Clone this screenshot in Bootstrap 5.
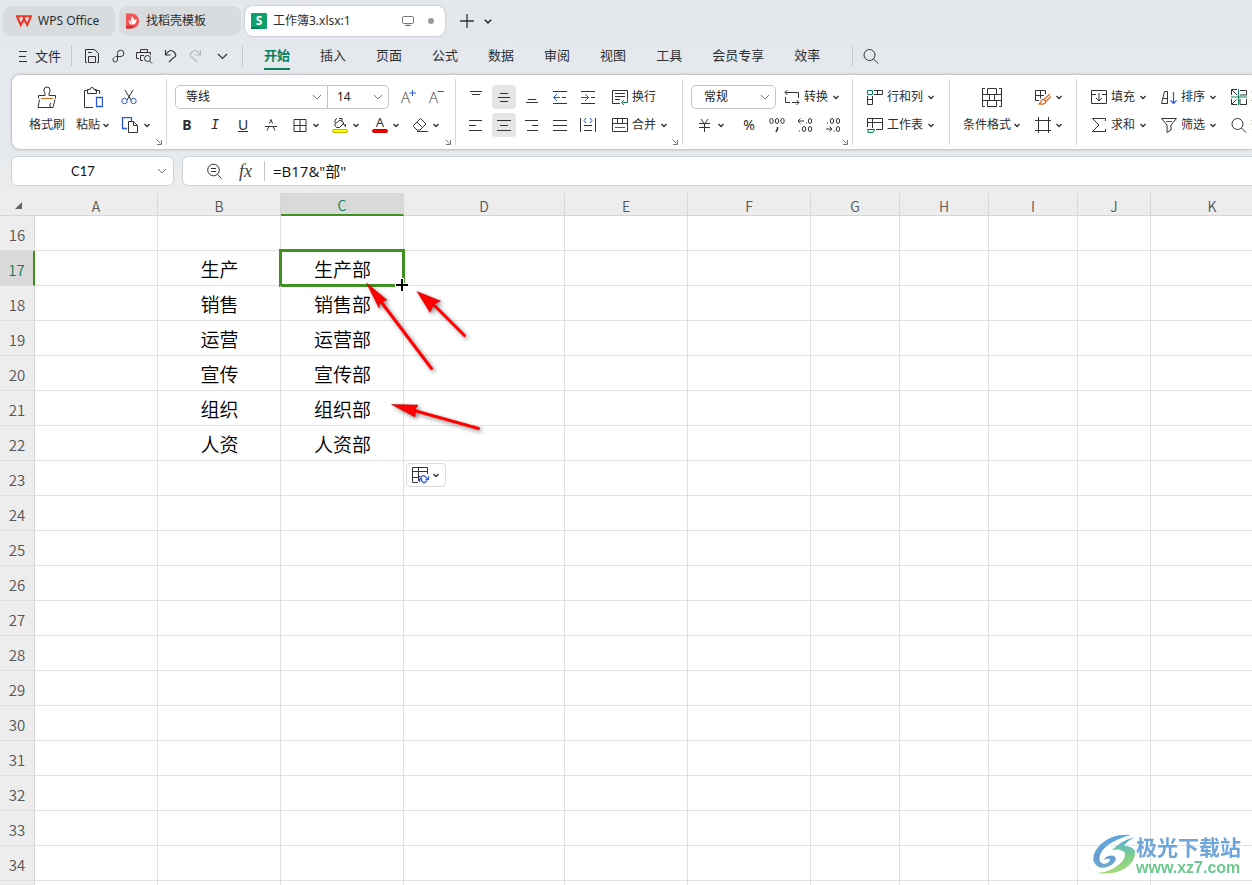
<!DOCTYPE html>
<html lang="zh-CN">
<head>
<meta charset="utf-8">
<meta name="viewport" content="width=device-width, initial-scale=1">
<title>工作簿3.xlsx - WPS Office</title>
<link href="https://cdn.jsdelivr.net/npm/bootstrap@5.3.0/dist/css/bootstrap.min.css" rel="stylesheet">
<style>
:root{--ink:#2b2e31;--green:#0a7f5a;--sel:#3f9120;--line:#e1e1e1}
body{font-family:"Noto Sans","Noto Sans CJK SC",sans-serif;font-size:12px;line-height:18px;color:var(--ink);
 height:100vh;overflow:hidden;background:#ededed linear-gradient(#e4e8ed 0,#e6e9ed 150px,#ededed 192px) no-repeat}
button{color:inherit}
svg{display:block;flex:none;fill:none;stroke:#333;stroke-width:1;overflow:visible}
svg text{stroke:none;fill:#333}
.doc-tab{height:30px;border:0;border-radius:8px;background:#d9dcdf;font-size:12px}
.doc-tab.active{background:#fff;box-shadow:0 0 2px rgba(60,70,80,.45)}
.tab-home{width:112px;padding-left:13px;gap:6px}
.tab-shell{width:122px;padding-left:6px}
.tab-book{width:200px;padding:0 11px 0 6px;gap:6px}
.tabstrip{padding:6px 3px 0;gap:4px}
.dot-mark{width:6px;height:6px;border-radius:50%;background:#999}
.plain{border:0;background:none;padding:0}
.menubar{height:39px;font-size:13px;padding-left:18px;gap:10px}
.menubar .plain{line-height:20px}
.vline{width:1px;height:20px;background:#c4c7ca}
.menubar .menu-link{font-size:13px;color:var(--ink);line-height:26px;border-bottom:2px solid transparent}
.menubar .menu-link.active{color:var(--green);font-weight:700;border-color:var(--green)}
.menus{gap:30px;padding:0 22px 0 11px}
.quick{gap:10px;padding:0 2px}
.ribbon{margin-left:12px;height:74px;background:#fff;border-radius:8px 0 0 8px;box-shadow:0 0 3px rgba(60,70,80,.55);padding-top:4px;overflow:hidden}
.grp{position:relative;flex:none;height:66px;border-right:1px solid #d4d4d4;padding-top:6px}
.g1{width:155px;padding-left:13px;gap:3px}.g2{width:289px;padding-left:8px}.g3{width:227px;padding-left:8px}
.g4{width:170px;padding-left:8px}.g5{width:97px;padding-left:10px}.g6{width:127px;padding-left:9px;gap:6px}.g7{width:240px;padding-left:10px;border:0}
.rows{display:flex;flex-direction:column;gap:4px}
.rows>div{display:flex;gap:4px;height:24px;align-items:center}
.g7 .rows>div{gap:6px}
.rb{display:flex;align-items:center;gap:4px;height:24px;min-width:24px;padding:0 4px;border:0;background:none;border-radius:4px;font-size:12px;white-space:nowrap}
.rb.on{background:#e5e5e5}
.ltr{justify-content:center;font-size:14px;padding:0}
.ital{font-family:"Liberation Mono",monospace}
.big{display:flex;flex-direction:column;align-items:center;gap:4px;border:0;background:none;padding:0 4px;font-size:12px;height:52px}
.big>svg{height:24px}
.big>span{display:flex;align-items:center;gap:2px;height:24px}
.corner{position:absolute;right:4px;bottom:0}
.combo{height:24px;font-size:12px;line-height:18px;padding:2px 20px 2px 10px;border:1px solid #c2c5c8;border-radius:5px;color:#222;
 background-position:right 4px center;background-size:12px 12px;
 background-image:url("data:image/svg+xml,%3Csvg xmlns='http://www.w3.org/2000/svg' viewBox='0 0 12 12'%3E%3Cpath d='M2 4l4 4 4-4' fill='none' stroke='%23777'/%3E%3C/svg%3E")}
.c-font{width:153px;border-radius:5px 0 0 5px}.c-size{width:61px;border-radius:0 5px 5px 0;border-left:0;padding-left:9px}.c-num{width:85px;padding-left:12px}
.fbar{padding:7px 0 7px 11px;gap:8px}
.fbox{height:30px;background:#fff;border:1px solid #d0d3d6;border-radius:6px}
.namebox{width:163px;padding-right:5px}
.namebox input{width:142px;font-family:Lato,sans-serif;font-size:13px;text-align:center}
.fbox input{border:0;outline:0;background:none;color:#111}
.f-input{font-size:15px;padding:0 8px;font-family:"Open Sans","Noto Sans CJK SC",sans-serif}
.fx-sign{font:italic 18px/24px "Liberation Serif",serif;color:#444}
.sheet{position:relative;overflow:hidden}
.grid-tbl{table-layout:fixed;width:1274px;border-collapse:separate;border-spacing:0;background:#fff}
.grid-tbl th{background:#ededed;color:#555;font:400 15px/22px "Noto Sans CJK SC",sans-serif;font-weight:350;text-align:center;padding:0}
.grid-tbl thead th{height:23px;font-size:14px;line-height:18px;padding-top:3px;border-right:1px solid #d6d6d6;border-bottom:1px solid #d6d6d6}
.grid-tbl tbody th{height:35px;padding-top:3px;border-right:1px solid #d6d6d6;border-bottom:1px solid #dedede}
.grid-tbl thead th:first-child{border-right:0}
.grid-tbl td{position:relative;padding:1px 0 0 1px;border-right:1px solid var(--line);border-bottom:1px solid var(--line);font:300 19px/28px "Noto Sans CJK SC",sans-serif;font-weight:350;color:#000;text-align:center}
.grid-tbl thead th.hot{background:#d9d9d9;color:var(--green);border-bottom:2px solid var(--sel)}
.grid-tbl tbody th.hot{background:#d9d9d9;color:var(--green);border-right:2px solid var(--sel)}
.cursor-cell::after{content:"";position:absolute;inset:-2px;border:3px solid var(--sel)}
.fill-opt{position:absolute;left:406px;top:270px;width:40px;height:24px;border:1px solid #dcdcdc;border-radius:4px;background:#fff;padding:0 5px;gap:2px}
.arrows{position:absolute;left:360px;top:77px;filter:drop-shadow(2px 2px 2px rgba(0,0,0,.45))}
.pointer{position:absolute;left:395px;top:85px}
.stamp{position:fixed;right:11px;bottom:8px}
.stamp-cn{font:700 21px/26px "Noto Sans CJK SC",sans-serif;color:#6ea6dc}
.stamp-url{font:700 16px/18px "Liberation Sans",sans-serif;color:#6cc88c;text-decoration:none}
</style>
</head>
<body>
<svg width="0" height="0" class="position-absolute">
<symbol id="cv" viewBox="0 0 8 8"><path d="M1.500 3L4 5.500 6.500 3" stroke-width="1.400"/></symbol>
<symbol id="launch" viewBox="0 0 6 6"><path d="M.5.5l4 4M5.500 1v4.500H1" stroke="#777"/></symbol>
<symbol id="brush" viewBox="0 0 20 24"><path d="M8 10.500V8q-1.500-1-1-3a3 3 0 0 1 6 0q.5 2-1 3v2.500h6.500v3M8 10.500H1.500v3M2.500 14.500L1 22.500h15l2-8M13 22v-3l1-1"/><path d="M4 13.500h12" stroke="#d9691f"/></symbol>
<symbol id="paste" viewBox="0 0 20 24"><path d="M5 5.500H1.500v17H10M12 5.500h4.500V9M4.500 8.500v-4H7q0-2 2-2t2 2h2.500v4z"/><path d="M13.500 12.500h6v9h-6z" stroke="#2b57d8" stroke-width="1.300"/></symbol>
<symbol id="cut" viewBox="0 0 16 16"><path d="M4 1l6 10M12 1L6 11"/><circle cx="3.500" cy="12" r="2.700" stroke="#2b57d8"/><circle cx="12.500" cy="12" r="2.700" stroke="#2b57d8"/></symbol>
<symbol id="copy" viewBox="0 0 16 16"><path d="M5 11.500H.5v-11h9V4" stroke="#2b57d8" stroke-width="1.300"/><path d="M6.500 4.500h5l4 4v7h-9zM11.500 4.500v4h4"/></symbol>
<symbol id="edge" viewBox="0 0 16 16"><path d="M2.500 2.500h12v12h-12zM8.500 2.500v12M2.500 8.500h12"/></symbol>
<symbol id="pour" viewBox="0 0 16 16"><path d="M7 1.500h3v3M8 3l4 3-4.500 4.500h-3L3 8.500V7zM3 6V3l2-1.500M11 6.500l2.500 3V7"/><rect x=".5" y="12.500" width="15" height="3" rx="1.500" fill="#ff0" stroke="#b9b900"/></symbol>
<symbol id="fontc" viewBox="0 0 16 16"><text x="8" y="10" font-size="13" text-anchor="middle">A</text><rect x=".5" y="12.500" width="15" height="3" rx="1.500" fill="#f00" stroke="#c00000"/></symbol>
<symbol id="erase" viewBox="0 0 16 16"><path d="M8.500 1.500L14 7l-6 6H5L1.500 9.500v-1zM5 5l5.500 5.500M5 14.500h11"/></symbol>
<symbol id="a-t" viewBox="0 0 16 16"><path d="M2 2.500h12M4 5.500h8"/></symbol>
<symbol id="a-m" viewBox="0 0 16 16"><path d="M4 4.500h8M2 8.500h12M4 12.500h8"/></symbol>
<symbol id="a-b" viewBox="0 0 16 16"><path d="M4 10.500h8M2 13.500h12"/></symbol>
<symbol id="out" viewBox="0 0 16 16"><path d="M1 2.500h14M10 8.500h4M1 14.500h14"/><path d="M8 8.500H1.500M5 5L1.500 8.500 5 12" stroke="#2b57d8"/></symbol>
<symbol id="in" viewBox="0 0 16 16"><path d="M1 2.500h14M11 8.500h4M1 14.500h14"/><path d="M1 8.500h7.500M5 5l3.500 3.500L5 12" stroke="#2b57d8"/></symbol>
<symbol id="al" viewBox="0 0 16 16"><path d="M1 3.500h13M1 8.500h7M1 13.500h13"/></symbol>
<symbol id="ac" viewBox="0 0 16 16"><path d="M1 3.500h14M4 8.500h8M1 13.500h14"/></symbol>
<symbol id="ar" viewBox="0 0 16 16"><path d="M1 3.500h13M8 8.500h6M3 13.500h11"/></symbol>
<symbol id="aj" viewBox="0 0 16 16"><path d="M1 3.500h14M1 8.500h14M1 13.500h14"/></symbol>
<symbol id="dist" viewBox="0 0 16 16"><path d="M.5 1v14M15.500 1v14M4 8.500h8M4 13.500h8"/><path d="M6 1L4 3.500 6 6M10 1l2 2.500L10 6" stroke="#2b57d8"/></symbol>
<symbol id="wrap" viewBox="0 0 16 16"><path d="M8 14.500H.5v-13h15V10M3 4.500h10M3 7.500h10M3 10.500h5"/><path d="M15.500 9v4.500h-5M12 11l-2.500 2.500L12 16" stroke="#0a7f5a"/></symbol>
<symbol id="merge" viewBox="0 0 16 16"><path d="M.5 1.500h15v13H.5zM.5 6.500h15M5.500 1.500v5M10.500 1.500v5"/><path d="M3 10.500h10" stroke="#0a7f5a"/></symbol>
<symbol id="conv" viewBox="0 0 16 16"><path d="M1.500 8v5.500H6M3.500 1L1 3.500 3.500 6M1 3.500h13.500V9M8 13.500h7M12.500 11l2.500 2.500-2.500 2.500"/></symbol>
<symbol id="rc" viewBox="0 0 16 16"><path d="M7 1.500h8.500v4H7M10.500 1.500v4M.5 7v8.500h5V7M.5 10.500h5"/><path d="M.5 1.500h5v4h-5z" stroke="#0a7f5a"/></symbol>
<symbol id="ws" viewBox="0 0 16 16"><path d="M.5 10V1.500h15v11H9M.5 5.500h15M5.500 1.500V11"/><path d="M0 12.500h8M1 12.500v3h5l1.500-3" stroke="#0a7f5a"/></symbol>
<symbol id="cond" viewBox="0 0 20 24"><path d="M3 3.500H.5v18H3M17 3.500h2.500v18H17M.5 9.500h19M.5 15.500h19M5.500 3.500h9M5.500 21.500h9M5.500 3.500v6M14.500 3.500v6M7.500 9.500v6M12.500 9.500v6M5.500 15.500v6M14.500 15.500v6"/></symbol>
<symbol id="style" viewBox="0 0 16 16"><path d="M4 11.500H.5v-10h10V5M5.500 1.500v8M.5 6.500H9"/><path d="M15 5l-6 5.500M16 7.500l-5 5M9 10.500q-3-.5-3 2.500l-2 2q6 1 7-2.500z" stroke="#d9691f" stroke-width="1.200"/></symbol>
<symbol id="frame" viewBox="0 0 16 16"><path d="M3.500 0v16M13.500 0v16M0 3.500h16M0 13.500h16"/></symbol>
<symbol id="down" viewBox="0 0 16 16"><path d="M.5 1.500h15v13H.5zM.5 5.500H5M11 5.500h4.500M8 4v8M5 9l3 3 3-3"/></symbol>
<symbol id="sum" viewBox="0 0 16 16"><path d="M14.500 4V1.500h-13L8 8l-6.500 6.500h13V12"/></symbol>
<symbol id="sort" viewBox="0 0 16 16"><path d="M.5 14.500L3.500 2.500h3v12zM2 9.500h4"/><path d="M12.500 3v11.500M9.500 11.500l3 3 3-3" stroke="#2b57d8" stroke-width="1.200"/></symbol>
<symbol id="filt" viewBox="0 0 16 16"><path d="M.5 1.500h15L10 8v5l-4 2.500V8z"/><path d="M5 4.500h6" stroke="#0a7f5a"/></symbol>
<symbol id="frz" viewBox="0 0 16 16"><path d="M6 .5H.5V6M9 1.500h6.500V6H9M.5 10v5.500H6M9 10v5.500h6.500V10M1 1l5 5M5.500 10.500L1 15"/><path d="M7.500 0v16M0 8h16" stroke="#0a7f5a"/></symbol>
<symbol id="find" viewBox="0 0 16 16"><circle cx="6.500" cy="7" r="5.500"/><path d="M10.500 11l4.500 4.500"/></symbol>
</svg>

<header>
<div class="tabstrip d-flex align-items-center">
 <button class="doc-tab tab-home d-flex align-items-center"><svg width="16" height="12" viewBox="0 0 16 12"><path d="M0 1.200h5.500M1 1.500L4.800 10 8 4l3.200 6L15 1.200H7l1.500 3" stroke="#ee3426" stroke-width="2"/></svg><span>WPS Office</span></button>
 <button class="doc-tab tab-shell d-flex align-items-center gap-1"><svg width="17" height="16" viewBox="0 0 18 16"><path d="M1 0h6a8 8 0 0 1 0 16H1z" fill="#ef5554" stroke="none"/><path d="M1 13h9l-3 3H1z" fill="#d52f35" stroke="none"/><path d="M4 7q3 1 3.500 5Q4 12 4 7zM7.500 3q4 4 .5 8.500Q5 7 7.500 3zM12 6q1 5-4 6 0-5 4-6z" fill="#fff" stroke="none"/></svg><span>找稻壳模板</span></button>
 <button class="doc-tab tab-book active d-flex align-items-center"><svg width="16" height="16" viewBox="0 0 16 16"><rect width="16" height="16" rx="1" fill="#10a06b" stroke="none"/><path d="M0 14h8v2H0z" fill="#087a50" stroke="none"/><text x="8" y="12" font-size="12" font-weight="700" text-anchor="middle" style="fill:#fff">S</text></svg><span>工作簿3.xlsx:1</span><svg class="ms-auto me-2" width="12" height="12" viewBox="0 0 12 12" style="stroke:#777"><rect x=".5" y="1.500" width="11" height="7" rx="1"/><path d="M6 8.500v2M3 10.500h6"/></svg><span class="dot-mark"></span></button>
 <button class="plain ms-2 pe-1" aria-label="新建"><svg width="18" height="16" viewBox="0 0 18 16"><path d="M3 8h14M10 1v14" stroke-width="1.300"/></svg></button>
 <button class="plain" aria-label="更多"><svg width="10" height="10"><use href="#cv"/></svg></button>
</div>

<nav class="menubar d-flex align-items-center">
 <button class="plain d-flex align-items-center gap-2"><svg width="9" height="12" viewBox="0 0 9 12"><path d="M1 1.500h8M1 6.500h7M1 11.500h8"/></svg><span>文件</span></button>
 <span class="vline"></span>
 <div class="quick d-flex">
 <button class="plain" aria-label="保存"><svg width="16" height="16" viewBox="0 0 16 16"><path d="M3 14.500H1.500v-13h9l4 4v9H13M4.500 14.500v-6h7v6zM4 4.500h4"/></svg></button>
 <button class="plain" aria-label="分享"><svg width="16" height="16" viewBox="0 0 16 16"><path d="M5.500 8.500H11A3.200 3.200 0 1 0 7.500 5.500V12a2.300 2.300 0 1 1-3-2.500"/></svg></button>
 <button class="plain" aria-label="打印预览"><svg width="16" height="16" viewBox="0 0 16 16"><path d="M4.500 4V1.500h7V4M3 10.500H.5v-6h14V7M7 12.500H4.500v-5H8"/><circle cx="11.500" cy="10.500" r="3"/><path d="M13.500 13l2.500 2.500"/></svg></button>
 <button class="plain" aria-label="撤销"><svg width="16" height="16" viewBox="0 0 16 16"><path d="M3.500 2v5h5M3.500 7Q8 0 12 4t-1 6l-4 4" stroke-width="1.100"/></svg></button>
 <button class="plain" aria-label="恢复"><svg width="16" height="16" viewBox="0 0 16 16" style="stroke:#b4b7ba"><path d="M12.500 2v5h-5M12.500 7Q8 0 4 4t1 6l4 4" stroke-width="1.100"/></svg></button>
 <button class="plain" aria-label="更多"><svg width="16" height="16" viewBox="0 0 16 16"><path d="M4 6l4.500 4.500L13 6" stroke-width="1.200"/></svg></button>
 </div>
 <span class="vline"></span>
 <div class="menus d-flex">
 <button class="plain menu-link active">开始</button><button class="plain menu-link">插入</button><button class="plain menu-link">页面</button><button class="plain menu-link">公式</button><button class="plain menu-link">数据</button><button class="plain menu-link">审阅</button><button class="plain menu-link">视图</button><button class="plain menu-link">工具</button><button class="plain menu-link">会员专享</button><button class="plain menu-link">效率</button>
 </div>
 <span class="vline"></span>
 <button class="plain" aria-label="搜索"><svg width="16" height="16"><use href="#find"/></svg></button>
</nav>

<div class="ribbon d-flex">
 <div class="grp g1 d-flex">
  <button class="big"><svg width="20" height="24"><use href="#brush"/></svg><span>格式刷</span></button>
  <button class="big"><svg width="20" height="24"><use href="#paste"/></svg><span>粘贴<svg width="8" height="8"><use href="#cv"/></svg></span></button>
  <div class="rows">
   <div><button class="rb" aria-label="剪切"><svg width="16" height="16"><use href="#cut"/></svg></button></div>
   <div><button class="rb" aria-label="复制"><svg width="18" height="16"><use href="#copy"/></svg><svg width="8" height="8"><use href="#cv"/></svg></button></div>
  </div>
  <svg class="corner" width="6" height="6"><use href="#launch"/></svg>
 </div>
 <div class="grp g2"><div class="rows">
  <div><span class="d-flex me-1"><select class="form-select combo c-font" aria-label="字体"><option>等线</option></select><select class="form-select combo c-size" aria-label="字号"><option>14</option></select></span>
   <button class="rb" aria-label="增大字号"><svg width="16" height="16" viewBox="0 0 16 16"><text x="0" y="14" font-size="15" font-weight="300" font-family="Open Sans">A</text><path d="M11.500 1v6M8.500 4H15" stroke="#2b57d8"/></svg></button>
   <button class="rb" aria-label="减小字号"><svg width="16" height="16" viewBox="0 0 16 16"><text x="0" y="14" font-size="15" font-weight="300" font-family="Open Sans">A</text><path d="M8.500 2.500H15" stroke="#2b57d8"/></svg></button></div>
  <div><button class="rb ltr fw-bold">B</button><button class="rb ltr fst-italic ital">I</button><button class="rb ltr text-decoration-underline">U</button><button class="rb" aria-label="删除线"><svg width="16" height="16" viewBox="0 0 16 16"><path d="M2 9.500h12M4 13.500L6 9.500M6.500 6.500L8 2.500l1.500 4M10 9.500l2 4"/></svg></button>
   <button class="rb" aria-label="边框"><svg width="17" height="16"><use href="#edge"/></svg><svg width="8" height="8"><use href="#cv"/></svg></button>
   <button class="rb" aria-label="填充颜色"><svg width="16" height="16"><use href="#pour"/></svg><svg width="8" height="8"><use href="#cv"/></svg></button>
   <button class="rb" aria-label="字体颜色"><svg width="16" height="16"><use href="#fontc"/></svg><svg width="8" height="8"><use href="#cv"/></svg></button>
   <button class="rb" aria-label="清除"><svg width="16" height="16"><use href="#erase"/></svg><svg width="8" height="8"><use href="#cv"/></svg></button></div>
  </div><svg class="corner" width="6" height="6"><use href="#launch"/></svg></div>
 <div class="grp g3"><div class="rows">
  <div><button class="rb" aria-label="顶端对齐"><svg width="16" height="16"><use href="#a-t"/></svg></button><button class="rb on" aria-label="垂直居中"><svg width="16" height="16"><use href="#a-m"/></svg></button><button class="rb" aria-label="底端对齐"><svg width="16" height="16"><use href="#a-b"/></svg></button><button class="rb" aria-label="减少缩进"><svg width="16" height="16"><use href="#out"/></svg></button><button class="rb" aria-label="增加缩进"><svg width="16" height="16"><use href="#in"/></svg></button>
   <button class="rb ms-1"><svg width="16" height="16"><use href="#wrap"/></svg>换行</button></div>
  <div><button class="rb" aria-label="左对齐"><svg width="16" height="16"><use href="#al"/></svg></button><button class="rb on" aria-label="水平居中"><svg width="16" height="16"><use href="#ac"/></svg></button><button class="rb" aria-label="右对齐"><svg width="16" height="16"><use href="#ar"/></svg></button><button class="rb" aria-label="两端对齐"><svg width="16" height="16"><use href="#aj"/></svg></button><button class="rb" aria-label="分散对齐"><svg width="16" height="16"><use href="#dist"/></svg></button>
   <button class="rb ms-1"><svg width="16" height="16"><use href="#merge"/></svg>合并<svg width="8" height="8"><use href="#cv"/></svg></button></div>
  </div><svg class="corner" width="6" height="6"><use href="#launch"/></svg></div>
 <div class="grp g4"><div class="rows">
  <div><select class="form-select combo c-num" aria-label="数字格式"><option>常规</option></select><button class="rb px-1"><svg width="16" height="16"><use href="#conv"/></svg>转换<svg width="8" height="8"><use href="#cv"/></svg></button></div>
  <div><button class="rb" aria-label="货币"><svg width="18" height="16" viewBox="0 0 18 16"><path d="M6 2l3 4.500M13 2l-3 4.500M4 6.500h11M4 10.500h11M9.500 6.500V15"/></svg><svg width="8" height="8"><use href="#cv"/></svg></button><button class="rb ltr ms-1">%</button>
   <button class="rb" aria-label="千位分隔"><svg width="16" height="16" viewBox="0 0 16 16"><ellipse cx="2.500" cy="4" rx="1.700" ry="2.500"/><ellipse cx="8" cy="4" rx="1.700" ry="2.500"/><ellipse cx="13.500" cy="4" rx="1.700" ry="2.500"/><path d="M8.500 10v2l-1.500 3" stroke-width="1.600"/></svg></button>
   <button class="rb" aria-label="增加小数"><svg width="16" height="16" viewBox="0 0 16 16"><path d="M1 4h6M3.500 1.500L1 4l2.500 2.500M9 6h1M2 14h1"/><ellipse cx="13" cy="4" rx="1.700" ry="2.500"/><ellipse cx="7" cy="12" rx="1.700" ry="2.500"/><ellipse cx="13" cy="12" rx="1.700" ry="2.500"/></svg></button>
   <button class="rb" aria-label="减少小数"><svg width="16" height="16" viewBox="0 0 16 16"><path d="M1 12h6M4.500 9.500L7 12l-2.500 2.500M9 14h1M2 6h1"/><ellipse cx="7" cy="4" rx="1.700" ry="2.500"/><ellipse cx="13" cy="4" rx="1.700" ry="2.500"/><ellipse cx="13" cy="12" rx="1.700" ry="2.500"/></svg></button></div>
  </div><svg class="corner" width="6" height="6"><use href="#launch"/></svg></div>
 <div class="grp g5"><div class="rows">
  <div><button class="rb"><svg width="16" height="16"><use href="#rc"/></svg>行和列<svg width="8" height="8"><use href="#cv"/></svg></button></div>
  <div><button class="rb"><svg width="16" height="16"><use href="#ws"/></svg>工作表<svg width="8" height="8"><use href="#cv"/></svg></button></div></div></div>
 <div class="grp g6 d-flex">
  <button class="big"><svg width="20" height="24"><use href="#cond"/></svg><span>条件格式<svg width="8" height="8"><use href="#cv"/></svg></span></button>
  <div class="rows"><div><button class="rb" aria-label="表格样式"><svg width="16" height="16"><use href="#style"/></svg><svg width="8" height="8"><use href="#cv"/></svg></button></div>
  <div><button class="rb" aria-label="单元格样式"><svg width="16" height="16"><use href="#frame"/></svg><svg width="8" height="8"><use href="#cv"/></svg></button></div></div></div>
 <div class="grp g7"><div class="rows">
  <div><button class="rb"><svg width="16" height="16"><use href="#down"/></svg>填充<svg width="8" height="8"><use href="#cv"/></svg></button><button class="rb"><svg width="16" height="16"><use href="#sort"/></svg>排序<svg width="8" height="8"><use href="#cv"/></svg></button><button class="rb"><svg width="16" height="16"><use href="#frz"/></svg>冻结</button></div>
  <div><button class="rb"><svg width="16" height="16"><use href="#sum"/></svg>求和<svg width="8" height="8"><use href="#cv"/></svg></button><button class="rb"><svg width="16" height="16"><use href="#filt"/></svg>筛选<svg width="8" height="8"><use href="#cv"/></svg></button><button class="rb"><svg width="16" height="16"><use href="#find"/></svg>查找</button></div></div></div>
</div>

<div class="fbar d-flex">
 <div class="fbox namebox d-flex align-items-center"><input value="C17" aria-label="名称框"><svg class="ms-auto" width="12" height="12" viewBox="0 0 12 12"><path d="M2 4l4 4 4-4" stroke="#777"/></svg></div>
 <div class="fbox flex-grow-1 d-flex align-items-center rounded-end-0 border-end-0 ps-4">
  <svg width="16" height="16" viewBox="0 0 16 16"><circle cx="6.500" cy="7" r="5.800"/><path d="M10.500 11.500l4 4M4 5.500h5M4 8.500h5"/></svg>
  <span class="fx-sign ms-3 me-2">fx</span><span class="vline ms-1"></span>
  <input class="f-input flex-grow-1" value='=B17&amp;"部"' aria-label="编辑栏"></div>
</div>
</header>

<main class="sheet">
<table class="grid-tbl">
<colgroup><col style="width:35px"><col style="width:123px"><col style="width:123px"><col style="width:123px"><col style="width:161px"><col style="width:123px"><col style="width:123px"><col style="width:89px"><col style="width:89px"><col style="width:89px"><col style="width:73px"><col style="width:123px"></colgroup>
<thead><tr><th scope="col"><svg class="mx-auto" width="8" height="8" viewBox="0 0 8 8"><path d="M8 0v7H1z" fill="#666" stroke="none"/></svg></th><th>A</th><th>B</th><th class="hot">C</th><th>D</th><th>E</th><th>F</th><th>G</th><th>H</th><th>I</th><th>J</th><th>K</th></tr></thead>
<tbody id="cells"></tbody>
</table>
<button class="fill-opt d-flex align-items-center" aria-label="自动填充选项"><svg width="18" height="18" viewBox="0 0 18 18"><path d="M6 16.500H.5v-15h15V8M.5 5.500h15M.5 11.500H6M6.500 1.500V15M6.500 10.500h2"/><path d="M8.500 12.500Q9.500 9.500 12 9.500l3.500 3.500M16.500 10v3.500h-3M15.500 14.500L12 17l-3.500-3.500M7.500 16v-3h3" stroke="#2b57d8" stroke-width="1.100"/></svg><svg width="8" height="8"><use href="#cv"/></svg></button>
<svg class="arrows" width="130" height="180" viewBox="360 270 130 180">
 <g stroke="#f00" stroke-width="3" stroke-linecap="round"><path d="M382 303l49.500 65.500M435 306l29.500 29.500M416 411l62.500 17.500"/></g>
 <g fill="#f00" stroke="#b00" stroke-width=".5"><path d="M366.500 283l20.500 17-4.500 1.500-2.500 2-1 4.500zM417 291.500l23.500 9.500-5.500 3-2.500 3-2.500 5.500zM391.500 404.500l26.500.5-2.500 4v3l-.5 5z"/></g>
</svg>
<svg class="pointer" width="14" height="14" viewBox="0 0 14 14"><path d="M7 0v14M0 7h14" stroke="#fff" stroke-width="4"/><path d="M7 1v12M1 7h12" stroke="#000" stroke-width="2"/></svg>
</main>

<aside class="stamp d-flex align-items-center">
 <svg width="43" height="42" viewBox="0 0 43 42"><defs><linearGradient id="sw" gradientUnits="userSpaceOnUse" x1="0" y1="0" x2="0" y2="40"><stop offset="0" stop-color="#5ba8e0"/><stop offset=".6" stop-color="#6a9fd2"/><stop offset="1" stop-color="#6cb4cf"/></linearGradient><linearGradient id="sg" gradientUnits="userSpaceOnUse" x1="20" y1="4" x2="20" y2="40"><stop offset="0" stop-color="#5aa8dc"/><stop offset=".5" stop-color="#7ed08c"/><stop offset="1" stop-color="#a8d873"/></linearGradient></defs><g stroke="none"><path fill="url(#sw)" d="M38 1Q20-1 8 10-2 20 1 28 5 36 14 33q8-3 9-8-1-5-8-3-3 1-4 4 3-2 6-1 0 4-6 5-6-1-4-9Q12 8 38 1z"/><path fill="url(#sg)" d="M42 3Q29 6 19 16q9-2 13 3 1 7-8 13-8 6-20 7 16 2 27-4 12-7 11-18-3-5-11-5 3-5 11-9z"/></g></svg>
 <div><div class="stamp-cn">极光下载站</div><a class="stamp-url d-block" href="#">www.xz7.com</a></div>
</aside>

<script>
const depts={17:"生产",18:"销售",19:"运营",20:"宣传",21:"组织",22:"人资"};
const body=document.getElementById("cells");
for(let r=16;r<=35;r++){
  const tr=body.insertRow(),th=document.createElement("th");
  th.scope="row";th.textContent=r;if(r===17)th.className="hot";
  tr.append(th);
  for(let c=0;c<11;c++){
    const td=tr.insertCell();
    if(depts[r]&&c===1)td.textContent=depts[r];
    if(depts[r]&&c===2)td.textContent=depts[r]+"部";
    if(r===17&&c===2)td.className="cursor-cell";
  }
}
</script>
<script src="https://cdn.jsdelivr.net/npm/bootstrap@5.3.0/dist/js/bootstrap.bundle.min.js"></script>
</body>
</html>
